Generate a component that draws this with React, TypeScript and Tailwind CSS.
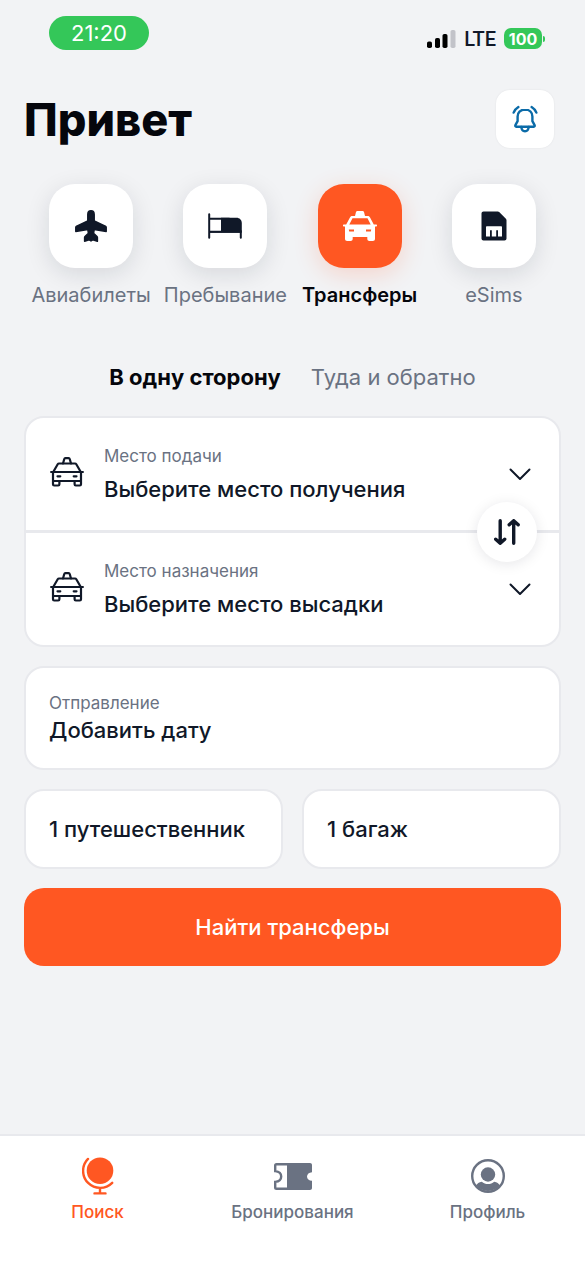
import { useState } from "react";

const PlaneIcon = () => (
  <svg width="32" height="32" viewBox="0 0 32 32" fill="currentColor" stroke="currentColor" strokeWidth="1.5" strokeLinejoin="round">
    <path d="M16 .8c-2.100 0-3.200 1.600-3.200 3.600v6.400L1.200 16.500c-.3.200-.4.400-.4.800v4.100l12-1.900.6 3.800-3.400 3.200c-.3.300-.4.500-.4.900v3.800l4.600-1.400L16 31l1.800-1.200 4.600 1.400v-3.800c0-.4-.1-.6-.4-.9l-3.400-3.200.6-3.800 12 1.900v-4.100c0-.4-.1-.6-.4-.8l-11.600-5.700V4.400c0-2-1.100-3.600-3.200-3.600z" />
  </svg>
);

const BedIcon = () => (
  <svg width="36" height="26" viewBox="-1 0 36 26" fill="none" stroke="currentColor" strokeWidth="2" strokeLinecap="round">
    <path d="M1.200 1.200v23.600M1.200 5.800h20M1.200 18.800h31M32.800 18v6.800" />
    <path d="M13 4.800h15.500c3 0 5.300 2.200 5.300 5.200v9.800H1.200v-1.500H13z" fill="currentColor" stroke="none" />
  </svg>
);

const TaxiSolidIcon = () => (
  <svg width="34" height="30" viewBox="0 0 34 30" fill="currentColor">
    <path d="M14.500 0h5c.8 0 1.300.4 1.500 1.100l1 3.900h2.700c1 0 1.700.4 2.200 1.300l3.900 7.200h2.200c.6 0 1 .4 1 1s-.4 1-1 1h-1v12.300c0 1.400-.9 2.200-2.200 2.200h-3.300c-1.300 0-2.200-.8-2.200-2.200V26H9.700v1.800c0 1.400-.9 2.200-2.200 2.200H4.200c-1.300 0-2.200-.8-2.200-2.200V15.500H1c-.6 0-1-.4-1-1s.4-1 1-1h2.200l3.900-7.200C7.600 5.400 8.300 5 9.300 5H12l1-3.900c.2-.7.700-1.100 1.500-1.100z" />
    <path d="M9.500 7.300h15l3.200 6.200H6.300zM5.800 18.500h5.200v2H6.200zM28.200 18.500H23v2h4.800z" fill="#ff5722" />
  </svg>
);

const TaxiIcon = () => (
  <svg className="mb-1 shrink-0" width="34" height="30" viewBox="0 0 34 30" fill="none" stroke="currentColor" strokeWidth="2.200" strokeLinecap="round" strokeLinejoin="round">
    <path d="M13 6.500l1.200-4.300c.2-.7.600-1 1.200-1h3.200c.6 0 1 .3 1.200 1L21 6.500" />
    <path d="M3.500 14.500L7.700 7.300c.3-.5.700-.8 1.300-.8h16c.6 0 1 .3 1.300.8l4.200 7.200M1.100 15h31.800" />
    <path d="M3 15v12.300c0 .7.400 1.200 1.200 1.200h4c.8 0 1.200-.5 1.200-1.200V24M31 15v12.300c0 .7-.4 1.200-1.200 1.200h-4c-.8 0-1.200-.5-1.200-1.200V24M3 24h28M7.500 19.300h2.800M23.700 19.300h2.800" />
  </svg>
);

const SimIcon = () => (
  <svg width="26" height="30" viewBox="0 0 26 30" fill="currentColor">
    <path d="M2.500.5h14.300c.5 0 1 .2 1.400.6l6.700 6.700c.4.4.6.900.6 1.400v18.300c0 1.100-.9 2-2 2h-21c-1.100 0-2-.9-2-2v-25c0-1.100.9-2 2-2z" />
    <path d="M6 15.200h14c.6 0 1 .4 1 1v9.300H5v-9.300c0-.6.400-1 1-1z" fill="#fff" />
    <path d="M9 19.200h1.800v6.800H9zM15.200 19.200H17v6.800h-1.800z" />
  </svg>
);

const BellIcon = () => (
  <svg width="26" height="28" viewBox="0 0 26 28" fill="none" stroke="currentColor" strokeWidth="2.400" strokeLinecap="round" strokeLinejoin="round">
    <path d="M13 4.600c-4.800 0-7.400 3-7.400 7v4.600l-2.200 4c-.4.800 0 1.500.8 1.500h17.600c.8 0 1.200-.7.800-1.500l-2.200-4v-4.600c0-4-2.600-7-7.400-7z" />
    <path d="M9.300 22c.2 2.800 1.700 4.200 3.700 4.200s3.500-1.400 3.700-4.200M1.600 7.600C2.500 5.300 4.100 3.400 6.400 2M24.400 7.600c-.9-2.300-2.500-4.200-4.800-5.600" />
  </svg>
);

const SwapIcon = () => (
  <svg width="26" height="26" viewBox="0 0 26 26" fill="none" stroke="currentColor" strokeWidth="3.400" strokeLinecap="round" strokeLinejoin="round">
    <path d="M6.200 1.700v22M1.700 20.200l4.500 4.100 4.500-4.100M19.700 24.300v-22M15.200 5.800l4.500-4.100 4.500 4.100" />
  </svg>
);

const ChevronIcon = () => (
  <svg width="22" height="13" viewBox="0 0 22 13" fill="none" stroke="currentColor" strokeWidth="2" strokeLinecap="round" strokeLinejoin="round">
    <path d="M1.500 1.500L11 11l9.500-9.500" />
  </svg>
);

const GlobeIcon = () => (
  <svg width="32" height="38" viewBox="1 0 32 38" fill="none" stroke="currentColor" strokeWidth="2.400" strokeLinecap="round">
    <circle cx="19" cy="13.700" r="13.300" fill="currentColor" stroke="none" />
    <path d="M7 1.900A17 17 0 0 0 31.200 25.800M19 31v5M13.500 36.400h11" />
  </svg>
);

const TicketIcon = () => (
  <svg width="38" height="27" viewBox="0 0 38 27">
    <path d="M14 1.200H2.500c-.8 0-1.300.5-1.300 1.300v5.600c3.600.4 6 2.400 6 5.400s-2.400 5-6 5.400v5.600c0 .8.500 1.300 1.300 1.300H14" fill="none" stroke="currentColor" strokeWidth="2.400" />
    <path d="M13 0h23c1.200 0 2 .8 2 2v7.200c-3 .2-5 1.900-5 4.300s2 4.100 5 4.300V25c0 1.200-.8 2-2 2H13z" fill="currentColor" />
  </svg>
);

const ProfileIcon = () => (
  <svg width="34" height="34" viewBox="0 0 34 34" fill="currentColor">
    <circle cx="17" cy="17" r="15.800" fill="none" stroke="currentColor" strokeWidth="2.400" />
    <circle cx="17" cy="15.500" r="7.200" />
    <path d="M5 26.500c1.200-2 3-3.300 5.800-3.800 1.800 1.500 3.900 2.300 6.200 2.300s4.400-.8 6.200-2.300c2.800.5 4.600 1.800 5.800 3.800A16 16 0 0 1 5 26.500z" />
  </svg>
);

const categories = [
  { name: "Авиабилеты", icon: <PlaneIcon /> },
  { name: "Пребывание", icon: <BedIcon /> },
  { name: "Трансферы", icon: <TaxiSolidIcon /> },
  { name: "eSims", icon: <SimIcon /> },
];

const tripTypes = ["В одну сторону", "Туда и обратно"];

const places = [
  { label: "Место подачи", value: "Выберите место получения" },
  { label: "Место назначения", value: "Выберите место высадки" },
];

const navItems = [
  { name: "Поиск", icon: <GlobeIcon /> },
  { name: "Бронирования", icon: <TicketIcon /> },
  { name: "Профиль", icon: <ProfileIcon /> },
];

const StatusBar = () => (
  <div className="flex h-[90px] items-start justify-between pt-4 pr-10 pl-[49px]">
    <span className="flex h-[34px] w-[100px] items-center justify-center rounded-full bg-[#34c759] text-[22px] text-white">
      21:20
    </span>
    <div className="flex items-center gap-2 pt-3">
      <svg width="29" height="20" viewBox="0 0 29 20">
        <rect x="0" y="12.500" width="5" height="6.500" rx="1.800" />
        <rect x="8" y="9" width="5" height="10" rx="1.800" />
        <rect x="15.500" y="5" width="5" height="14" rx="1.800" />
        <rect x="23.500" y="1" width="5" height="18" rx="1.800" fill="#c2c3c9" />
      </svg>
      <span className="font-['Roboto'] text-[20px] leading-5 font-medium">LTE</span>
      <div className="flex items-center gap-px">
        <span className="flex h-[21px] w-[38px] items-center justify-center rounded-[7px] bg-[#34c759] text-base font-bold text-white">
          100
        </span>
        <span className="h-[6px] w-[2px] rounded-r-full bg-[#34c759]" />
      </div>
    </div>
  </div>
);

const App = () => {
  const [category, setCategory] = useState("Трансферы");
  const [tripType, setTripType] = useState("В одну сторону");
  const [tab, setTab] = useState("Поиск");

  return (
    <div className="flex min-h-screen flex-col bg-[#f2f3f5] font-['Inter',sans-serif] text-gray-900">
      <StatusBar />

      {/* Header */}
      <header className="flex h-[58px] items-center justify-between pr-[31px] pl-6">
        <h1 className="text-[45px] leading-none font-extrabold text-[#05060c]">Привет</h1>
        <button
          aria-label="Уведомления"
          className="flex size-[58px] items-center justify-center rounded-[14px] bg-white text-[#0b6ba8] shadow-[0_0_2px_rgba(17,24,39,0.08)]"
        >
          <BellIcon />
        </button>
      </header>

      <main className="px-6 pt-9">
        {/* Categories */}
        <div className="grid grid-cols-4">
          {categories.map((item) => (
            <button
              key={item.name}
              onClick={() => setCategory(item.name)}
              className="flex flex-col items-center gap-[13px]"
            >
              <span
                className={`flex size-[84px] items-center justify-center rounded-[26px] ${
                  category === item.name
                    ? "bg-[#ff5722] text-white shadow-[0_6px_24px_rgba(255,87,34,0.2)]"
                    : "bg-white shadow-[0_6px_24px_rgba(17,24,39,0.12)]"
                }`}
              >
                {item.icon}
              </span>
              <span
                className={`text-[20px] leading-[28px] whitespace-nowrap ${
                  category === item.name ? "font-semibold text-[#05060c]" : "text-gray-500"
                }`}
              >
                {item.name}
              </span>
            </button>
          ))}
        </div>

        {/* Trip type */}
        <div className="mt-[53px] flex justify-center gap-[30px]">
          {tripTypes.map((type) => (
            <button
              key={type}
              onClick={() => setTripType(type)}
              className={`text-[22px] leading-[30px] ${
                tripType === type ? "font-bold text-[#05060c]" : "text-gray-500"
              }`}
            >
              {type}
            </button>
          ))}
        </div>

        {/* Places */}
        <div className="relative mt-6 rounded-[20px] border-2 border-[#e8e9ed] bg-white">
          {places.map((place, index) => (
            <button
              key={place.label}
              className={`flex w-full items-center py-[26px] pr-7 pl-6 text-left ${
                index > 0 ? "border-t-3 border-[#e8e9ed]" : ""
              }`}
            >
              <TaxiIcon />
              <span className="ml-5 flex flex-1 flex-col gap-[6px]">
                <span className="text-[17px] leading-[24px] text-gray-500">{place.label}</span>
                <span className="text-[22px] leading-[30px] font-medium">{place.value}</span>
              </span>
              <ChevronIcon />
            </button>
          ))}
          <button
            aria-label="Поменять местами"
            className="absolute top-1/2 right-[22px] flex size-[60px] -translate-y-1/2 items-center justify-center rounded-full bg-white shadow-[0_2px_14px_rgba(17,24,39,0.1)]"
          >
            <SwapIcon />
          </button>
        </div>

        {/* Date */}
        <button className="mt-[19px] flex w-full flex-col rounded-[20px] border-2 border-[#e8e9ed] bg-white px-[23px] py-[23px] text-left">
          <span className="text-[17px] leading-[24px] text-gray-500">Отправление</span>
          <span className="text-[22px] leading-[30px] font-medium">Добавить дату</span>
        </button>

        <div className="mt-[19px] grid grid-cols-2 gap-[19px]">
          <button className="rounded-[20px] border-2 border-[#e8e9ed] bg-white px-[23px] py-[23px] text-left text-[22px] leading-[30px] font-medium whitespace-nowrap">
            1 путешественник
          </button>
          <button className="rounded-[20px] border-2 border-[#e8e9ed] bg-white px-[23px] py-[23px] text-left text-[22px] leading-[30px] font-medium whitespace-nowrap">
            1 багаж
          </button>
        </div>

        <button className="mt-[19px] w-full rounded-[20px] bg-[#ff5722] py-6 text-[22px] leading-[30px] font-medium text-white">
          Найти трансферы
        </button>
      </main>

      {/* Bottom navigation */}
      <nav className="mt-auto grid h-[132px] grid-cols-3 items-start border-t-2 border-[#e8e9ed] bg-white pt-5">
        {navItems.map((item) => (
          <button
            key={item.name}
            onClick={() => setTab(item.name)}
            className={`flex flex-col items-center gap-1 ${
              tab === item.name ? "text-[#ff5722]" : "text-gray-500"
            }`}
          >
            <span className="flex h-[40px] items-center">{item.icon}</span>
            <span className="text-[17px] leading-[24px] font-medium">{item.name}</span>
          </button>
        ))}
      </nav>
    </div>
  );
};

export default App;
